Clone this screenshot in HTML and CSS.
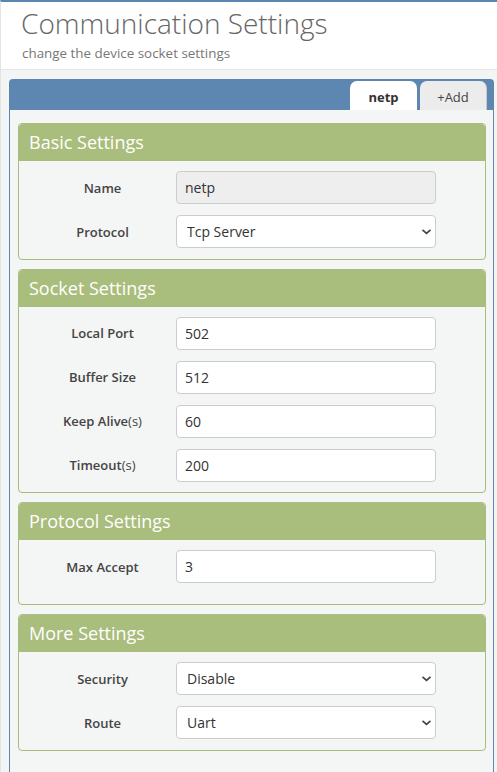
FILE: index.html
```html
<!DOCTYPE html>
<html lang="en">
<head>
<meta charset="utf-8">
<title>Communication Settings</title>
<link rel="stylesheet" href="styles.css">
</head>
<body>
<header class="page-header">
  <h1 class="page-title">Communication Settings</h1>
  <p class="page-subtitle">change the device socket settings</p>
</header>

<main class="content">
  <section class="panel">
    <div class="panel-head">
      <nav class="tabs">
        <a class="tab tab-active">netp</a>
        <a class="tab tab-add">+Add</a>
      </nav>
    </div>

    <div class="panel-body">
      <fieldset class="group">
        <div class="group-head">Basic Settings</div>
        <div class="group-body">
          <div class="row">
            <label class="row-label">Name</label>
            <input class="field field-readonly" type="text" value="netp" readonly>
          </div>
          <div class="row">
            <label class="row-label">Protocol</label>
            <div class="select-wrap">
              <select class="field field-select"><option>Tcp Server</option></select>
              <svg class="chevron" viewBox="0 0 10 6" width="9" height="6"><path d="M1.2 1.2l3.8 3.4 3.8-3.4" fill="none" stroke="#444" stroke-width="2" stroke-linecap="round" stroke-linejoin="round"/></svg>
            </div>
          </div>
        </div>
      </fieldset>

      <fieldset class="group">
        <div class="group-head">Socket Settings</div>
        <div class="group-body">
          <div class="row">
            <label class="row-label">Local Port</label>
            <input class="field" type="text" value="502">
          </div>
          <div class="row">
            <label class="row-label">Buffer Size</label>
            <input class="field" type="text" value="512">
          </div>
          <div class="row">
            <label class="row-label">Keep Alive<span class="unit">(s)</span></label>
            <input class="field" type="text" value="60">
          </div>
          <div class="row">
            <label class="row-label">Timeout<span class="unit">(s)</span></label>
            <input class="field" type="text" value="200">
          </div>
        </div>
      </fieldset>

      <fieldset class="group">
        <div class="group-head">Protocol Settings</div>
        <div class="group-body group-body-tall">
          <div class="row">
            <label class="row-label">Max Accept</label>
            <input class="field" type="text" value="3">
          </div>
        </div>
      </fieldset>

      <fieldset class="group">
        <div class="group-head">More Settings</div>
        <div class="group-body">
          <div class="row">
            <label class="row-label">Security</label>
            <div class="select-wrap">
              <select class="field field-select"><option>Disable</option></select>
              <svg class="chevron" viewBox="0 0 10 6" width="9" height="6"><path d="M1.2 1.2l3.8 3.4 3.8-3.4" fill="none" stroke="#444" stroke-width="2" stroke-linecap="round" stroke-linejoin="round"/></svg>
            </div>
          </div>
          <div class="row">
            <label class="row-label">Route</label>
            <div class="select-wrap">
              <select class="field field-select"><option>Uart</option></select>
              <svg class="chevron" viewBox="0 0 10 6" width="9" height="6"><path d="M1.2 1.2l3.8 3.4 3.8-3.4" fill="none" stroke="#444" stroke-width="2" stroke-linecap="round" stroke-linejoin="round"/></svg>
            </div>
          </div>
        </div>
      </fieldset>
    </div>
  </section>
</main>
</body>
</html>
```

FILE: styles.css
```css
* {
  box-sizing: border-box;
}

html,
body {
  height: 100%;
}

body {
  margin: 0;
  font-family: "Open Sans", "Noto Sans", sans-serif;
  color: #333;
  background: #ffffff;
  border-top: 2px solid #5b87b0;
  border-left: 1px solid #e2e4e4;
  display: flex;
  flex-direction: column;
  overflow: hidden;
}

/* Page title block */
.page-header {
  padding: 5px 20px 6px;
  border-bottom: 1px solid #e6e8e8;
  background: #ffffff;
}

.page-title {
  margin: 0;
  font-size: 28px;
  line-height: 33px;
  font-weight: 300;
  color: #666;
}

.page-subtitle {
  margin: 3px 0 0 1px;
  font-size: 13.4px;
  line-height: 20px;
  color: #777;
}

/* Grey work area */
.content {
  flex: 1;
  background: #f3f4f4;
  padding: 9px 3px 0 8px;
  display: flex;
}

.panel {
  flex: 1;
  border: 1px solid #5b87b0;
  border-bottom: none;
  border-radius: 4px 4px 0 0;
  background: #f4f5f5;
  display: flex;
  flex-direction: column;
}

.panel-head {
  height: 30px;
  background: #5d87b1;
  display: flex;
  justify-content: flex-end;
  align-items: flex-end;
  padding-right: 6px;
}

.tabs {
  display: flex;
  gap: 3px;
}

.tab {
  height: 29px;
  width: 67px;
  display: flex;
  align-items: center;
  justify-content: center;
  font-size: 13px;
  border-radius: 7px 7px 0 0;
  padding-top: 2px;
}

.tab-active {
  background: #ffffff;
  font-weight: 700;
  color: #333;
}

.tab-add {
  width: 67px;
  background: #ececec;
  color: #444;
  border-right: 1px solid #c9c9c9;
}

.panel-body {
  padding: 13px 7px 20px 8px;
  display: flex;
  flex-direction: column;
  gap: 9px;
}

/* Settings groups */
.group {
  margin: 0;
  padding: 0;
  min-width: 0;
  border: 1px solid #a9bd7c;
  border-radius: 4px;
  background: #f4f5f5;
  overflow: hidden;
}

.group-head {
  height: 37px;
  line-height: 36px;
  padding-left: 10px;
  background: #a9bd7c;
  color: #ffffff;
  font-size: 18px;
}

.group-body {
  padding: 10px 0 10.5px;
  display: flex;
  flex-direction: column;
  gap: 11px;
}

.group-body-tall {
  padding-bottom: 21px;
}

.row {
  display: grid;
  grid-template-columns: 147px 260px;
  align-items: center;
  padding-left: 10px;
}

.row-label {
  text-align: center;
  font-size: 13px;
  font-weight: 600;
  color: #444;
}

.unit {
  font-weight: 400;
}

.field {
  width: 100%;
  height: 33px;
  border: 1px solid #ccc;
  border-radius: 4px;
  background: #ffffff;
  padding: 0 8px;
  font-family: "Open Sans", "Noto Sans", sans-serif;
  font-size: 14px;
  color: #333;
  outline: none;
}

.field-readonly {
  background: #eeeeee;
}

.select-wrap {
  position: relative;
}

.field-select {
  appearance: none;
  -webkit-appearance: none;
  padding-left: 10px;
  display: block;
}

.chevron {
  position: absolute;
  right: 5px;
  top: 14px;
  pointer-events: none;
}
```
